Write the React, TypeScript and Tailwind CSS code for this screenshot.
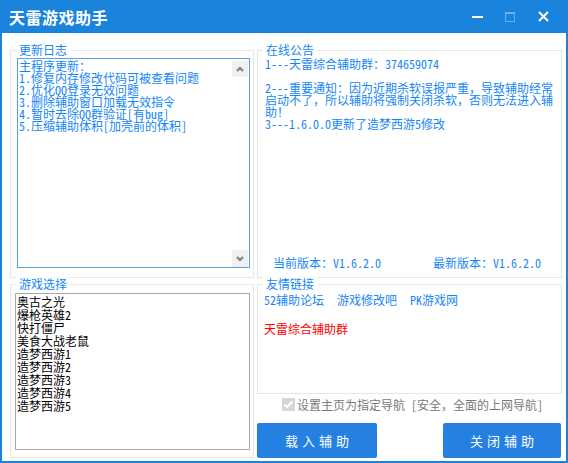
import React from "react";

const FONT = "font-['Noto_Sans_Mono_CJK_SC','Noto_Sans_CJK_SC',sans-serif]";

function Group({
  label,
  className,
  children,
}: {
  label: string;
  className?: string;
  children?: React.ReactNode;
}) {
  return (
    <div className={"relative border border-[#e6e6e6] " + (className ?? "")}>
      <div className="absolute top-[-8px] left-[5px] bg-white px-[3px] text-[12px] leading-[14px] text-[#1587f5]">
        {label}
      </div>
      {children}
    </div>
  );
}

function Chevron({ up }: { up?: boolean }) {
  return (
    <svg width="8" height="6" viewBox="0 0 8 6">
      <polyline
        points={up ? "1,5 4,2 7,5" : "1,1 4,4 7,1"}
        fill="none"
        stroke="#7d7d7d"
        strokeWidth="2"
      />
    </svg>
  );
}

export default function App() {
  const log = [
    "主程序更新：",
    "1.修复内存修改代码可被查看问题",
    "2.优化QQ登录无效问题",
    "3.删除辅助窗口加载无效指令",
    "4.暂时去除QQ群验证[有bug]",
    "5.压缩辅助体积[加壳前的体积]",
  ];
  const games = [
    "奥古之光",
    "爆枪英雄2",
    "快打僵尸",
    "美食大战老鼠",
    "造梦西游1",
    "造梦西游2",
    "造梦西游3",
    "造梦西游4",
    "造梦西游5",
  ];
  const notice = [
    "1---天雷综合辅助群：374659074",
    "\u00a0",
    "2---重要通知：因为近期杀软误报严重，导致辅助经常",
    "启动不了，所以辅助将强制关闭杀软，否则无法进入辅",
    "助！",
    "3---1.6.0.0更新了造梦西游5修改",
  ];
  return (
    <div className={"w-[568px] h-[463px] flex flex-col bg-white " + FONT}>
      {/* title bar */}
      <div className="h-[33px] shrink-0 bg-[#1a84dc] flex items-center pl-[9px]">
        <div className="text-white text-[16px] font-bold leading-[20px] tracking-[0.5px]">
          天雷游戏助手
        </div>
        <div className="ml-auto flex items-center h-full">
          <div className="w-[33px] flex justify-center">
            <div className="w-[11px] h-[2px] bg-white" />
          </div>
          <div className="w-[33px] flex justify-center ml-[-1px]">
            <div className="w-[10px] h-[10px] border border-[#6db1ec] border-t-2" />
          </div>
          <div className="w-[34px] flex justify-center mr-[8px]">
            <svg width="11" height="11" viewBox="0 0 11 11">
              <path d="M1 1 L10 10 M10 1 L1 10" stroke="white" strokeWidth="2" />
            </svg>
          </div>
        </div>
      </div>

      {/* body */}
      <div className="flex-1 flex gap-[3px] border-x-2 border-b-2 border-[#1a84dc] pl-[8px] pr-[4px] pt-[17px] pb-[3px]">
        {/* left column */}
        <div className="w-[244px] flex flex-col gap-[6px]">
          <Group label="更新日志" className="h-[228px] pt-[7px] pl-[6px]">
            <div className="w-[233px] h-[210px] border border-[#5a9fe6] flex">
              <div className="flex-1 pl-[1px] pt-[1px] text-[12px] leading-[12px] text-[#1587f5] whitespace-nowrap">
                {log.map((l) => (
                  <div key={l}>{l}</div>
                ))}
              </div>
              <div className="w-[16px] mr-[1px] flex flex-col justify-between pt-[2px]">
                <div className="h-[16px] bg-[#efefef] flex items-center justify-center">
                  <Chevron up />
                </div>
                <div className="h-[17px] bg-[#efefef] flex items-center justify-center">
                  <Chevron />
                </div>
              </div>
            </div>
          </Group>
          <Group label="游戏选择" className="h-[174px] pt-[8px] pl-[4px]">
            <div className="w-[235px] h-[157px] border border-[#a9a9a9] pl-[1px] pt-[1px] text-[12px] leading-[13px] text-black">
              {games.map((g) => (
                <div key={g}>{g}</div>
              ))}
            </div>
          </Group>
        </div>

        {/* right column */}
        <div className="w-[305px] flex flex-col">
          <Group label="在线公告" className="h-[228px] flex flex-col pt-[7px] pl-[7px] pb-[8px]">
            <div className="text-[12px] leading-[12px] text-[#1587f5] whitespace-nowrap">
              {notice.map((l, i) => (
                <div key={i}>{l}</div>
              ))}
            </div>
            <div className="mt-auto flex text-[12px] leading-[12px] text-[#1587f5] whitespace-nowrap pl-[8px]">
              <div className="w-[160px]">当前版本：V1.6.2.0</div>
              <div>最新版本：V1.6.2.0</div>
            </div>
          </Group>
          <Group label="友情链接" className="h-[110px] mt-[6px] pt-[9px] pl-[6px]">
            <div className="flex gap-[13px] text-[12px] leading-[12px] text-[#1587f5] whitespace-nowrap">
              <span>52辅助论坛</span>
              <span>游戏修改吧</span>
              <span>PK游戏网</span>
            </div>
            <div className="mt-[17px] text-[12px] leading-[12px] text-[#ff0000]">
              天雷综合辅助群
            </div>
          </Group>
          <div className="mt-[4px] ml-[25px] flex items-center gap-[2px] h-[13px]">
            <div className="w-[13px] h-[13px] bg-[#d6d6d6] flex items-center justify-center">
              <svg width="11" height="9" viewBox="0 0 11 9">
                <polyline points="1.5,4.5 4,7 9.5,1.5" fill="none" stroke="white" strokeWidth="2" />
              </svg>
            </div>
            <div className="text-[12px] leading-[12px] text-[#7a7a7a] whitespace-nowrap">
              设置主页为指定导航 [安全，全面的上网导航]
            </div>
          </div>
          <div className="mt-[12px] flex justify-between pr-[1px]">
            <div className="w-[120px] h-[35px] rounded-[2px] bg-[#2481e1] flex items-center justify-center text-white text-[13px] tracking-[4px] pl-[4px]">
              载入辅助
            </div>
            <div className="w-[118px] h-[35px] rounded-[2px] bg-[#2481e1] flex items-center justify-center text-white text-[13px] tracking-[4px] pl-[4px]">
              关闭辅助
            </div>
          </div>
        </div>
      </div>
    </div>
  );
}
